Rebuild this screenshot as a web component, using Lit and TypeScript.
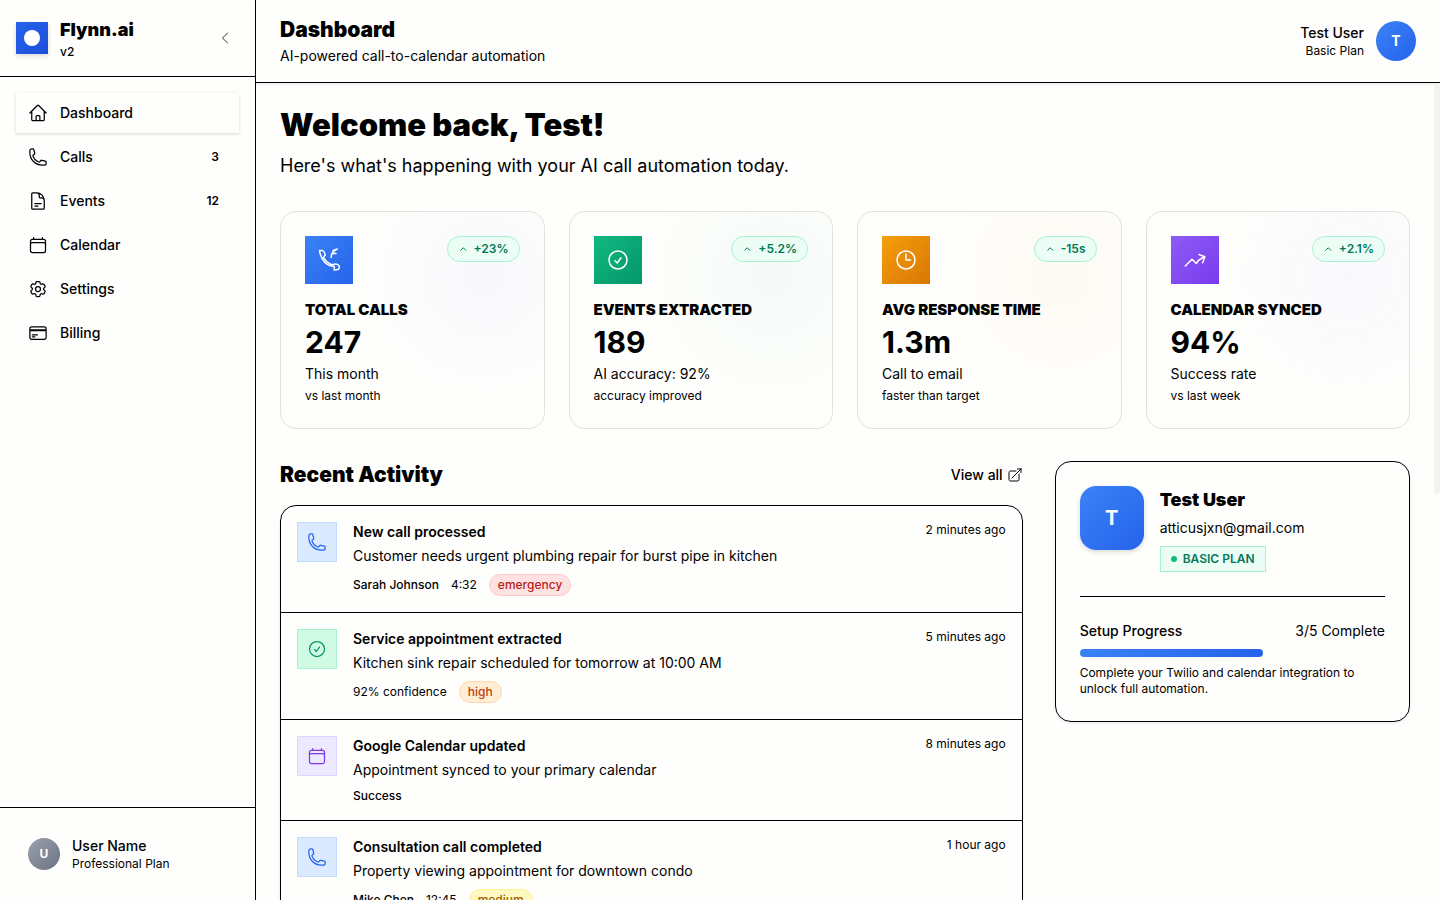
import { LitElement, html, css, svg } from "lit";
import { customElement, property } from "lit/decorators.js";
import { classMap } from "lit/directives/class-map.js";

const ICONS: Record<string, string> = {
  home: "m2.25 12 8.954-8.955c.44-.439 1.152-.439 1.591 0L21.75 12M4.5 9.75v10.125c0 .621.504 1.125 1.125 1.125H9.75v-4.875c0-.621.504-1.125 1.125-1.125h2.25c.621 0 1.125.504 1.125 1.125V21h4.125c.621 0 1.125-.504 1.125-1.125V9.75M8.25 21h8.25",
  phone: "M2.25 6.75c0 8.284 6.716 15 15 15h2.25a2.25 2.25 0 0 0 2.25-2.25v-1.372c0-.516-.351-.966-.852-1.091l-4.423-1.106c-.44-.11-.902.055-1.173.417l-.97 1.293c-.282.376-.769.542-1.21.38a12.035 12.035 0 0 1-7.143-7.143c-.162-.441.004-.928.38-1.21l1.293-.97c.363-.271.527-.734.417-1.173L6.963 3.102a1.125 1.125 0 0 0-1.091-.852H4.5A2.25 2.25 0 0 0 2.25 4.5v2.25Z",
  incoming: "M2.5 2.5H5.8C7.4 3.6 8.2 5.2 8.2 7.2L6.3 9.4C8 12.4 10.6 14.8 13.8 16.4L17 16.2C19 15.8 21 16.4 22 17.8C22.6 19.2 22.2 20.6 21 21.6L17.2 22V18.2C10.6 18.2 4 13.4 2.5 2.5ZM20.3 1L16.2 2.4M20.3 1C16.6 2.6 14.2 5 14.2 9.4M14.8 5.6H19",
  page: "M19.5 14.25v-2.625a3.375 3.375 0 0 0-3.375-3.375h-1.5A1.125 1.125 0 0 1 13.5 7.125v-1.5a3.375 3.375 0 0 0-3.375-3.375H8.25m0 12.75h7.5m-7.5 3H12M10.5 2.25H5.625c-.621 0-1.125.504-1.125 1.125v17.25c0 .621.504 1.125 1.125 1.125h12.75c.621 0 1.125-.504 1.125-1.125V11.25a9 9 0 0 0-9-9Z",
  calendar: "M6.75 3v2.25M17.25 3v2.25M3 18.75V7.5a2.25 2.25 0 0 1 2.25-2.25h13.5A2.25 2.25 0 0 1 21 7.5v11.25m-18 0A2.25 2.25 0 0 0 5.25 21h13.5A2.25 2.25 0 0 0 21 18.75m-18 0v-7.5A2.25 2.25 0 0 1 5.25 9h13.5A2.25 2.25 0 0 1 21 11.25v7.5",
  cog: "M9.594 3.94c.09-.542.56-.94 1.11-.94h2.593c.55 0 1.02.398 1.11.94l.213 1.281c.063.374.313.686.645.87.074.04.147.083.22.127.325.196.72.257 1.075.124l1.217-.456a1.125 1.125 0 0 1 1.37.49l1.296 2.247a1.125 1.125 0 0 1-.26 1.431l-1.003.827c-.293.241-.438.613-.43.992a7.723 7.723 0 0 1 0 .255c-.008.378.137.75.43.991l1.004.827c.424.35.534.955.26 1.43l-1.298 2.247a1.125 1.125 0 0 1-1.369.491l-1.217-.456c-.355-.133-.75-.072-1.076.124a6.47 6.47 0 0 1-.22.128c-.331.183-.581.495-.644.869l-.213 1.281c-.09.543-.56.94-1.11.94h-2.594c-.55 0-1.019-.398-1.11-.94l-.213-1.281c-.062-.374-.312-.686-.644-.87a6.52 6.52 0 0 1-.22-.127c-.325-.196-.72-.257-1.076-.124l-1.217.456a1.125 1.125 0 0 1-1.369-.49l-1.297-2.247a1.125 1.125 0 0 1 .26-1.431l1.004-.827c.292-.24.437-.613.43-.991a6.932 6.932 0 0 1 0-.255c.007-.38-.138-.751-.43-.992l-1.004-.827a1.125 1.125 0 0 1-.26-1.43l1.297-2.247a1.125 1.125 0 0 1 1.37-.491l1.216.456c.356.133.751.072 1.076-.124.072-.044.146-.086.22-.128.332-.183.582-.495.644-.869l.214-1.28ZM15 12a3 3 0 1 1-6 0 3 3 0 0 1 6 0Z",
  card: "M2.25 8.25h19.5M2.25 9h19.5m-16.5 5.25h6m-6 2.25h3m-3.75 3h15a2.25 2.25 0 0 0 2.25-2.25V6.75A2.25 2.25 0 0 0 19.5 4.5h-15a2.25 2.25 0 0 0-2.25 2.25v10.5A2.25 2.25 0 0 0 4.5 19.5Z",
  check: "M9 12.75 11.25 15 15 9.75M21 12a9 9 0 1 1-18 0 9 9 0 0 1 18 0Z",
  clock: "M12 6v6h4.5m4.5 0a9 9 0 1 1-18 0 9 9 0 0 1 18 0Z",
  trend: "M2.25 18 9 11.25l4.306 4.306a11.95 11.95 0 0 1 5.814-5.518l2.74-1.22m0 0-5.94-2.281m5.94 2.28-2.28 5.941",
  external: "M13.5 6H5.25A2.25 2.25 0 0 0 3 8.25v10.5A2.25 2.25 0 0 0 5.25 21h10.5A2.25 2.25 0 0 0 18 18.75V10.5m-10.5 6L21 3m0 0h-5.25M21 3v5.25",
  left: "M15.75 19.5 8.25 12l7.5-7.5",
  up: "m5.5 14.5 5-5 5 5",
};

const icon = (name: string, size = 20) => svg`
  <svg width=${size} height=${size} viewBox="0 0 24 24" fill="none" stroke="currentColor"
    stroke-width=${name === "up" ? 2 : 1.5} stroke-linecap="round" stroke-linejoin="round" aria-hidden="true">
    <path d=${ICONS[name]}></path>
  </svg>`;

const shared = css`
  * { box-sizing: border-box; margin: 0; padding: 0; }
  svg { display: block; flex: none; }
  a { color: inherit; text-decoration: none; }
  button { font: inherit; color: inherit; background: none; border: 0; text-align: left; cursor: pointer; }
  .display { font-weight: 900; }
`;

@customElement("side-bar")
class SideBar extends LitElement {
  static styles = [shared, css`
    :host { display: flex; flex-direction: column; width: 256px; flex: none; border-right: 1px solid #000; }
    .brand { display: flex; align-items: center; gap: 12px; padding: 16px; border-bottom: 1px solid #000; }
    .logo { width: 32px; height: 32px; display: grid; place-items: center; background: linear-gradient(135deg, #2563eb, #1d4ed8); box-shadow: 0 2px 5px rgba(0, 0, 0, 0.15); }
    .logo::after { content: ""; width: 16px; height: 16px; border-radius: 50%; background: #fff; }
    .names { flex: 1; }
    .title { font-size: 18px; line-height: 28px; }
    .version { font-size: 12px; line-height: 16px; font-weight: 500; }
    .collapse { padding: 6px; color: #333; }
    nav { flex: 1; display: flex; flex-direction: column; gap: 4px; padding: 16px; }
    .item { display: flex; align-items: center; gap: 12px; height: 40px; padding: 0 12px; font-size: 14px; line-height: 20px; font-weight: 500; }
    .item.active { box-shadow: 0 1px 3px rgba(0, 0, 0, 0.16); }
    .label { flex: 1; }
    .count { padding: 0 8px; font-size: 12px; line-height: 16px; font-weight: 600; }
    footer { border-top: 1px solid #000; padding: 16px; }
    .user { display: flex; width: 100%; align-items: center; gap: 12px; padding: 12px; }
    .avatar { width: 32px; height: 32px; border-radius: 50%; display: grid; place-items: center; background: linear-gradient(135deg, #9ca3af, #6b7280); color: #fff; font-size: 12px; line-height: 16px; font-weight: 700; }
    .name { display: block; font-size: 14px; line-height: 20px; font-weight: 500; }
    .plan { display: block; font-size: 12px; line-height: 16px; }
  `];

  items = [
    { icon: "home", label: "Dashboard", active: true },
    { icon: "phone", label: "Calls", count: 3 },
    { icon: "page", label: "Events", count: 12 },
    { icon: "calendar", label: "Calendar" },
    { icon: "cog", label: "Settings" },
    { icon: "card", label: "Billing" },
  ] as { icon: string; label: string; active?: boolean; count?: number }[];

  render() {
    return html`
      <div class="brand">
        <span class="logo"></span>
        <div class="names">
          <div class="title display">Flynn.ai</div>
          <div class="version">v2</div>
        </div>
        <button class="collapse" aria-label="Collapse sidebar">${icon("left", 16)}</button>
      </div>
      <nav>
        ${this.items.map((i) => html`
          <a href="#" class=${classMap({ item: true, active: !!i.active })}>
            ${icon(i.icon)}<span class="label">${i.label}</span>
            ${i.count ? html`<span class="count">${i.count}</span>` : ""}
          </a>`)}
      </nav>
      <footer>
        <button class="user">
          <span class="avatar">U</span>
          <span><span class="name">User Name</span><span class="plan">Professional Plan</span></span>
        </button>
      </footer>`;
  }
}

@customElement("stat-card")
class StatCard extends LitElement {
  @property() icon = "";
  @property() tone = "";
  @property() change = "";
  @property() label = "";
  @property() value = "";
  @property() caption = "";
  @property() note = "";

  static styles = [shared, css`
    :host { display: block; }
    .card { height: 100%; padding: 24px; border: 1px solid #e2e3da; border-radius: 16px; }
    .blue { background: radial-gradient(circle at 77% 30%, rgba(79, 100, 246, 0.04), transparent 128px); }
    .green { background: radial-gradient(circle at 77% 30%, rgba(16, 150, 129, 0.04), transparent 128px); }
    .amber { background: radial-gradient(circle at 77% 30%, rgba(245, 148, 11, 0.04), transparent 128px); }
    .violet { background: radial-gradient(circle at 77% 30%, rgba(139, 92, 246, 0.04), transparent 128px); }
    .top { display: flex; justify-content: space-between; align-items: flex-start; margin-bottom: 16px; }
    .tile { width: 48px; height: 48px; display: grid; place-items: center; color: #fff; }
    .blue .tile { background: linear-gradient(135deg, #3b82f6, #2563eb); }
    .green .tile { background: linear-gradient(135deg, #10b981, #059669); }
    .amber .tile { background: linear-gradient(135deg, #f59e0b, #d97706); }
    .violet .tile { background: linear-gradient(135deg, #8b5cf6, #7c3aed); }
    .change { display: flex; align-items: center; gap: 4px; padding: 4px 10px; border: 1px solid #a7f3d0; border-radius: 16px; background: #ecfdf5; color: #047857; font-size: 12px; line-height: 16px; font-weight: 600; }
    .label { font-size: 15px; line-height: 20px; text-transform: uppercase; }
    .value { margin: 4px 0; font-size: 30px; line-height: 36px; font-weight: 700; }
    .caption { font-size: 14px; line-height: 20px; }
    .note { margin-top: 4px; font-size: 12px; line-height: 16px; }
  `];

  render() {
    return html`
      <article class="card ${this.tone}">
        <div class="top">
          <span class="tile">${icon(this.icon, 24)}</span>
          <span class="change">${icon("up", 12)}${this.change}</span>
        </div>
        <h3 class="label display">${this.label}</h3>
        <p class="value">${this.value}</p>
        <p class="caption">${this.caption}</p>
        <p class="note">${this.note}</p>
      </article>`;
  }
}

@customElement("activity-list")
class ActivityList extends LitElement {
  static styles = [shared, css`
    :host { display: block; }
    .head { display: flex; align-items: center; justify-content: space-between; margin-bottom: 16px; }
    h2 { font-size: 21px; line-height: 28px; }
    .all { display: flex; align-items: center; gap: 4px; font-size: 14px; line-height: 20px; font-weight: 500; }
    ul { list-style: none; border: 1px solid #000; border-radius: 16px; box-shadow: 0 1px 3px rgba(0, 0, 0, 0.1); }
    li { display: flex; align-items: flex-start; gap: 16px; padding: 16px; }
    li + li { border-top: 1px solid #000; }
    .tile { width: 40px; height: 40px; display: grid; place-items: center; border: 1px solid; }
    .tile svg { display: block; }
    .blue { background: #dbeafe; border-color: #bfdbfe; color: #2563eb; }
    .green { background: #d1fae5; border-color: #a7f3d0; color: #059669; }
    .violet { background: #ede9fe; border-color: #ddd6fe; color: #7c3aed; }
    .body { flex: 1; min-width: 0; }
    h3 { font-size: 14px; line-height: 20px; font-weight: 600; }
    .text { margin: 4px 0 8px; font-size: 14px; line-height: 20px; }
    .meta { display: flex; align-items: center; gap: 12px; font-size: 12px; line-height: 16px; }
    .strong { font-weight: 500; }
    .tag { padding: 2px 8px; border: 1px solid; border-radius: 12px; font-weight: 500; }
    .emergency { background: #fee2e2; border-color: #fecaca; color: #b91c1c; }
    .high { background: #ffedd5; border-color: #fed7aa; color: #c2410c; }
    .medium { background: #fef9c3; border-color: #fef08a; color: #a16207; }
    time { font-size: 12px; line-height: 16px; }
  `];

  items = [
    { icon: "phone", tone: "blue", title: "New call processed", text: "Customer needs urgent plumbing repair for burst pipe in kitchen", who: "Sarah Johnson", info: "4:32", tag: "emergency", time: "2 minutes ago" },
    { icon: "check", tone: "green", title: "Service appointment extracted", text: "Kitchen sink repair scheduled for tomorrow at 10:00 AM", info: "92% confidence", tag: "high", time: "5 minutes ago" },
    { icon: "calendar", tone: "violet", title: "Google Calendar updated", text: "Appointment synced to your primary calendar", who: "Success", time: "8 minutes ago" },
    { icon: "phone", tone: "blue", title: "Consultation call completed", text: "Property viewing appointment for downtown condo", who: "Mike Chen", info: "12:45", tag: "medium", time: "1 hour ago" },
  ] as { icon: string; tone: string; title: string; text: string; who?: string; info?: string; tag?: string; time: string }[];

  render() {
    return html`
      <div class="head">
        <h2 class="display">Recent Activity</h2>
        <a class="all" href="#">View all ${icon("external", 16)}</a>
      </div>
      <ul>
        ${this.items.map((i) => html`
          <li>
            <span class="tile ${i.tone}">${icon(i.icon)}</span>
            <div class="body">
              <h3>${i.title}</h3>
              <p class="text">${i.text}</p>
              <div class="meta">
                ${i.who ? html`<span class="strong">${i.who}</span>` : ""}
                ${i.info ? html`<span>${i.info}</span>` : ""}
                ${i.tag ? html`<span class="tag ${i.tag}">${i.tag}</span>` : ""}
              </div>
            </div>
            <time>${i.time}</time>
          </li>`)}
      </ul>`;
  }
}

@customElement("profile-card")
class ProfileCard extends LitElement {
  static styles = [shared, css`
    :host { display: block; }
    .card { padding: 24px; border: 1px solid #000; border-radius: 16px; box-shadow: 0 1px 3px rgba(0, 0, 0, 0.1); }
    .who { display: flex; align-items: flex-start; gap: 16px; padding-bottom: 24px; border-bottom: 1px solid #000; }
    .avatar { flex: none; width: 64px; height: 64px; display: grid; place-items: center; border-radius: 16px; background: linear-gradient(135deg, #3b82f6, #2563eb); color: #fff; font-size: 20px; line-height: 28px; font-weight: 700; box-shadow: 0 2px 5px rgba(0, 0, 0, 0.15); }
    h2 { font-size: 18px; line-height: 28px; }
    .mail { margin: 4px 0 8px; font-size: 14px; line-height: 20px; }
    .plan { display: inline-flex; align-items: center; gap: 6px; padding: 4px 10px; border: 1px solid #a7f3d0; background: #ecfdf5; color: #047857; font-size: 12px; line-height: 16px; font-weight: 600; vertical-align: top; }
    .plan::before { content: ""; width: 6px; height: 6px; border-radius: 50%; background: #10b981; }
    .row { display: flex; justify-content: space-between; margin-top: 24px; font-size: 14px; line-height: 20px; }
    .strong { font-weight: 500; }
    .track { height: 8px; margin: 8px 0; }
    .bar { height: 8px; border-radius: 4px; background: linear-gradient(135deg, #3b82f6, #2563eb); }
    .hint { font-size: 12px; line-height: 16px; }
  `];

  done = 3;
  total = 5;

  render() {
    return html`
      <section class="card">
        <div class="who">
          <span class="avatar">T</span>
          <div>
            <h2 class="display">Test User</h2>
            <p class="mail">atticusjxn@gmail.com</p>
            <span class="plan">BASIC PLAN</span>
          </div>
        </div>
        <div class="row"><span class="strong" id="setup">Setup Progress</span><span>${this.done}/${this.total} Complete</span></div>
        <div class="track" role="progressbar" aria-labelledby="setup" aria-valuemin="0" aria-valuemax=${this.total} aria-valuenow=${this.done}>
          <div class="bar" style="width: ${(this.done / this.total) * 100}%"></div>
        </div>
        <p class="hint">Complete your Twilio and calendar integration to unlock full automation.</p>
      </section>`;
  }
}

@customElement("app-root")
class AppRoot extends LitElement {
  static styles = [shared, css`
    :host { display: flex; height: 100vh; overflow: hidden; background: #fefefc; color: #000; font-family: Inter, "Liberation Sans", sans-serif; }
    .page { flex: 1; min-width: 0; display: flex; flex-direction: column; }
    header { display: flex; align-items: center; justify-content: space-between; padding: 16px 24px; border-bottom: 1px solid #000; box-shadow: 0 1px 3px rgba(0, 0, 0, 0.1); }
    h1 { font-size: 21px; line-height: 28px; }
    .sub { margin-top: 2px; font-size: 14px; line-height: 20px; }
    .user { display: flex; align-items: center; gap: 12px; text-align: right; }
    .name { font-size: 14px; line-height: 20px; font-weight: 500; }
    .plan { font-size: 12px; line-height: 16px; }
    .avatar { width: 40px; height: 40px; display: grid; place-items: center; border-radius: 50%; background: linear-gradient(135deg, #3b82f6, #2563eb); color: #fff; font-size: 14px; line-height: 20px; font-weight: 700; }
    .view { flex: 1; min-height: 0; display: flex; }
    main { flex: 1; min-width: 0; padding: 24px; overflow-y: auto; scrollbar-width: none; }
    .rail { width: 6px; }
    .thumb { height: 411px; border-radius: 0 0 3px 3px; background: #f3f4ee; }
    .welcome { font-size: 31px; line-height: 36px; }
    .lead { margin: 8px 0 30px; font-size: 18px; line-height: 30px; }
    .stats { display: grid; grid-template-columns: repeat(4, 1fr); gap: 24px; margin-bottom: 32px; }
    .columns { display: grid; grid-template-columns: repeat(3, 1fr); gap: 32px; align-items: start; }
    .wide { grid-column: span 2; }
  `];

  stats = [
    { icon: "incoming", tone: "blue", change: "+23%", label: "Total Calls", value: "247", caption: "This month", note: "vs last month" },
    { icon: "check", tone: "green", change: "+5.2%", label: "Events Extracted", value: "189", caption: "AI accuracy: 92%", note: "accuracy improved" },
    { icon: "clock", tone: "amber", change: "-15s", label: "Avg Response Time", value: "1.3m", caption: "Call to email", note: "faster than target" },
    { icon: "trend", tone: "violet", change: "+2.1%", label: "Calendar Synced", value: "94%", caption: "Success rate", note: "vs last week" },
  ];

  render() {
    return html`
      <side-bar></side-bar>
      <div class="page">
        <header>
          <div>
            <h1 class="display">Dashboard</h1>
            <p class="sub">AI-powered call-to-calendar automation</p>
          </div>
          <div class="user">
            <div><div class="name">Test User</div><div class="plan">Basic Plan</div></div>
            <span class="avatar">T</span>
          </div>
        </header>
        <div class="view">
          <main>
            <h2 class="welcome display">Welcome back, Test!</h2>
            <p class="lead">Here's what's happening with your AI call automation today.</p>
            <div class="stats">
              ${this.stats.map((s) => html`
                <stat-card .icon=${s.icon} .tone=${s.tone} .change=${s.change} .label=${s.label}
                  .value=${s.value} .caption=${s.caption} .note=${s.note}></stat-card>`)}
            </div>
            <div class="columns">
              <activity-list class="wide"></activity-list>
              <profile-card></profile-card>
            </div>
          </main>
          <div class="rail"><div class="thumb"></div></div>
        </div>
      </div>`;
  }
}
